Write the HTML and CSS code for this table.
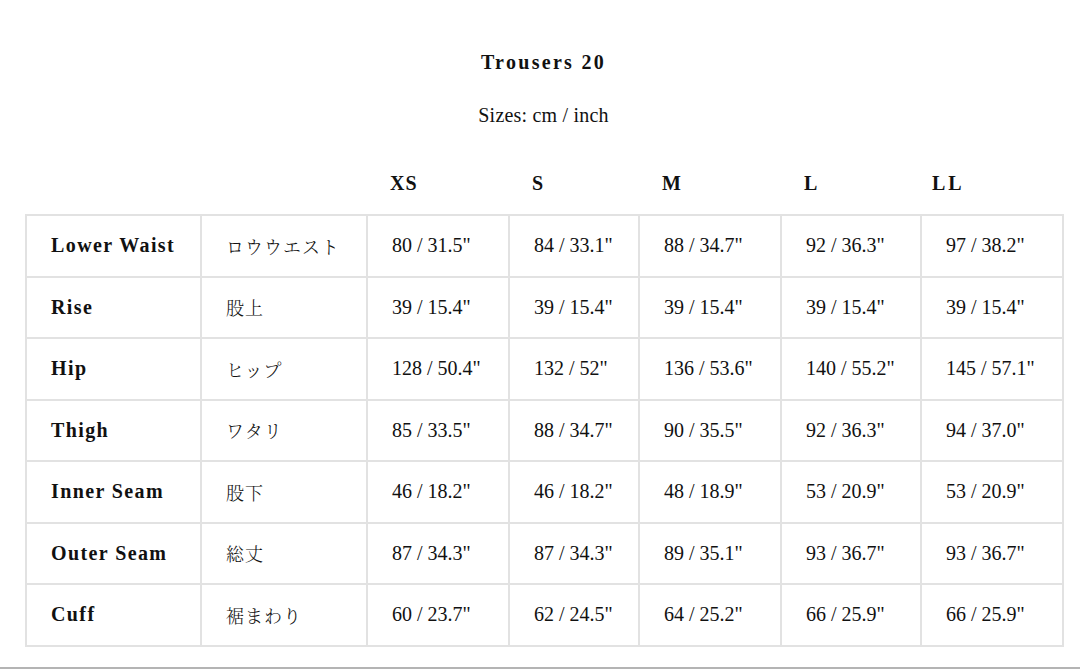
FILE: index.html
```html
<!DOCTYPE html>
<html lang="en">
<head>
<meta charset="utf-8">
<title>Trousers 20</title>
<link rel="stylesheet" href="styles.css">
</head>
<body>
<main class="sheet">
  <h1 class="title">Trousers 20</h1>
  <p class="units">Sizes: cm / inch</p>
  <table class="sizes">
    <colgroup>
      <col class="c-label"><col class="c-jp"><col class="c-xs"><col class="c-s"><col class="c-m"><col class="c-l"><col class="c-ll">
    </colgroup>
    <thead>
      <tr><th></th><th></th><th>XS</th><th>S</th><th>M</th><th>L</th><th class="wide">LL</th></tr>
    </thead>
    <tbody>
      <tr><td class="name">Lower Waist</td><td class="jp">ロウウエスト</td><td>80 / 31.5"</td><td>84 / 33.1"</td><td>88 / 34.7"</td><td>92 / 36.3"</td><td>97 / 38.2"</td></tr>
      <tr><td class="name">Rise</td><td class="jp">股上</td><td>39 / 15.4"</td><td>39 / 15.4"</td><td>39 / 15.4"</td><td>39 / 15.4"</td><td>39 / 15.4"</td></tr>
      <tr><td class="name">Hip</td><td class="jp">ヒップ</td><td>128 / 50.4"</td><td>132 / 52"</td><td>136 / 53.6"</td><td>140 / 55.2"</td><td>145 / 57.1"</td></tr>
      <tr><td class="name">Thigh</td><td class="jp">ワタリ</td><td>85 / 33.5"</td><td>88 / 34.7"</td><td>90 / 35.5"</td><td>92 / 36.3"</td><td>94 / 37.0"</td></tr>
      <tr><td class="name">Inner Seam</td><td class="jp">股下</td><td>46 / 18.2"</td><td>46 / 18.2"</td><td>48 / 18.9"</td><td>53 / 20.9"</td><td>53 / 20.9"</td></tr>
      <tr><td class="name">Outer Seam</td><td class="jp">総丈</td><td>87 / 34.3"</td><td>87 / 34.3"</td><td>89 / 35.1"</td><td>93 / 36.7"</td><td>93 / 36.7"</td></tr>
      <tr><td class="name">Cuff</td><td class="jp">裾まわり</td><td>60 / 23.7"</td><td>62 / 24.5"</td><td>64 / 25.2"</td><td>66 / 25.9"</td><td>66 / 25.9"</td></tr>
    </tbody>
  </table>
</main>
<div class="divider"></div>
</body>
</html>
```

FILE: styles.css
```css
html, body {
  margin: 0;
  padding: 0;
  background: #ffffff;
}

body {
  font-family: "Liberation Serif", "Times New Roman", serif;
  color: #111111;
  width: 1080px;
  height: 670px;
  overflow: hidden;
}

.sheet {
  width: 1037px;
  margin-left: 25px;
  padding-top: 50px;
}

.title {
  margin: 0;
  text-align: center;
  font-size: 20px;
  line-height: 24px;
  font-weight: 700;
  letter-spacing: 2.3px;
}

.units {
  margin: 29px 0 0;
  text-align: center;
  font-size: 20px;
  line-height: 24px;
  letter-spacing: 0.2px;
}

.sizes {
  margin-top: 25px;
  width: 1037px;
  table-layout: fixed;
  border-collapse: collapse;
  font-size: 20px;
}

.c-label { width: 175px; }
.c-jp { width: 166px; }
.c-xs { width: 142px; }
.c-s { width: 130px; }
.c-m { width: 142px; }
.c-l { width: 140px; }
.c-ll { width: 142px; }

.sizes th {
  height: 62px;
  padding: 0 0 0 23px;
  text-align: left;
  font-weight: 700;
  letter-spacing: 1px;
  vertical-align: middle;
}

.sizes th.wide {
  padding-left: 11px;
  letter-spacing: 3px;
}

.sizes td {
  height: 59.5px;
  padding: 0 0 0 24px;
  border: 2px solid #e2e2e2;
  vertical-align: middle;
  white-space: nowrap;
}

.sizes td.name {
  font-weight: 700;
  letter-spacing: 1.4px;
}

.sizes td.jp {
  font-family: "Noto Serif CJK JP", "Noto Sans CJK JP", sans-serif;
  font-weight: 300;
  font-size: 18px;
  letter-spacing: 1px;
}

.divider {
  position: absolute;
  left: 0;
  top: 667px;
  width: 1080px;
  border-top: 2px solid #b4b4b4;
}
```
